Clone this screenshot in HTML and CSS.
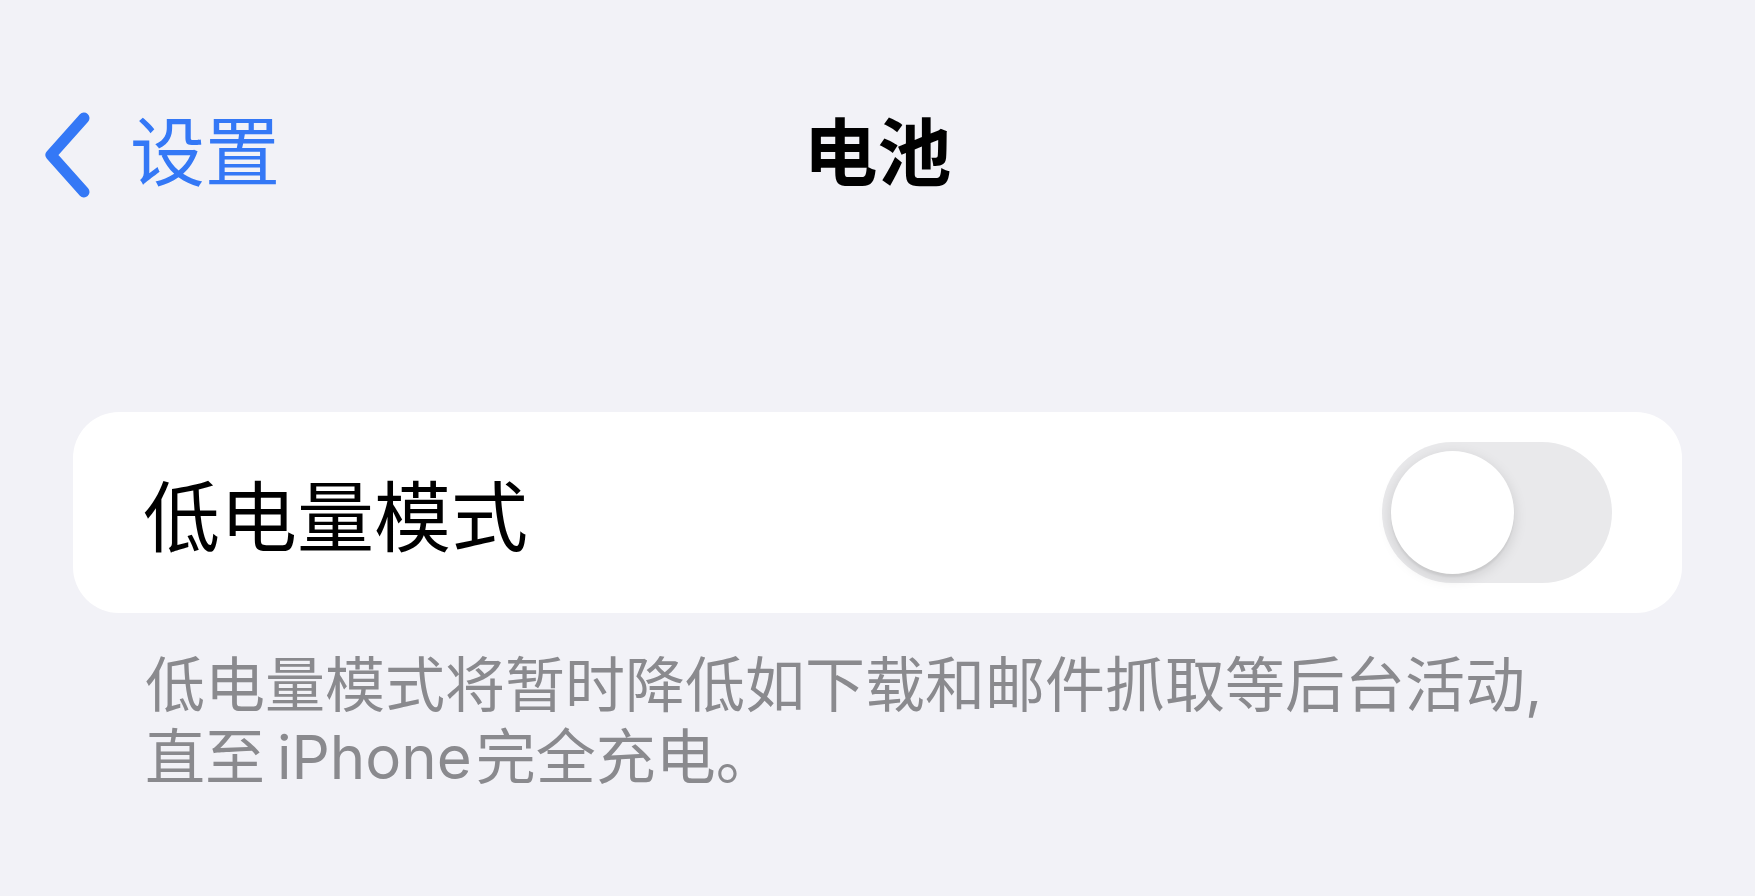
FILE: index.html
```html
<!DOCTYPE html>
<html lang="zh-CN">
<head>
    <meta charset="UTF-8">
    <meta name="viewport" content="width=device-width, initial-scale=1.0">
    <title>电池</title>
    <link rel="stylesheet" href="styles.css">
</head>
<body>
    <div class="nav-bar">
        <a class="back-link" href="#">
            <svg class="back-icon" viewBox="0 0 50 86" width="50" height="86">
                <path d="M42 6 L9 43 L42 80" fill="none" stroke="currentColor" stroke-width="11" stroke-linecap="round" stroke-linejoin="round"/>
            </svg>
            <span class="nav-text">设置</span>
        </a>
        <div class="nav-title nav-text">电池</div>
        <div></div>
    </div>

    <div class="group">
        <div class="row">
            <div class="row-label">低电量模式</div>
            <div class="switch" id="lowPower" onclick="toggleSwitch(this)">
                <div class="switch-knob"></div>
            </div>
        </div>
    </div>

    <div class="group-footer">
        低电量模式将暂时降低如下载和邮件抓取等后台活动,<br>直至<span class="latin">iPhone</span>完全充电。
    </div>

    <script>
        function toggleSwitch(el) {
            // 切换开关状态
            el.classList.toggle('on');
        }
    </script>
</body>
</html>
```

FILE: styles.css
```css
body {
    margin: 0;
    background-color: #f2f2f7;
    font-family: Inter, "Noto Sans CJK SC", sans-serif;
    color: #000;
}

.nav-bar {
    display: grid;
    grid-template-columns: 1fr auto 1fr;
    align-items: center;
    height: 110px;
    margin-top: 93px;
    padding: 0 42px;
}

.back-link {
    display: flex;
    align-items: center;
    gap: 38px;
    color: #3478f6;
    text-decoration: none;
    font-size: 75px;
}

.back-icon {
    display: block;
}

.nav-text {
    padding-bottom: 14px;
}

.nav-title {
    font-size: 74px;
    font-weight: 700;
}

.group {
    margin: 209px 73px 0;
    background-color: #fff;
    border-radius: 46px;
}

.row {
    display: flex;
    align-items: center;
    justify-content: space-between;
    height: 201px;
    padding: 0 70px 0 70px;
}

.row-label {
    font-size: 77px;
}

.switch {
    display: flex;
    align-items: center;
    box-sizing: border-box;
    width: 230px;
    height: 141px;
    padding: 0 9px;
    border-radius: 71px;
    background-color: #e9e9eb;
    cursor: pointer;
    transition: background-color 0.3s ease;
}

.switch-knob {
    width: 123px;
    height: 123px;
    border-radius: 50%;
    background-color: #fff;
    box-shadow: 0 4px 14px rgba(0, 0, 0, 0.13), 0 3px 2px rgba(0, 0, 0, 0.05);
    transition: transform 0.3s ease;
}

.switch.on {
    background-color: #34c759;
}

.switch.on .switch-knob {
    transform: translateX(89px);
}

.group-footer {
    margin-top: 36px;
    padding: 0 145px;
    font-size: 60px;
    line-height: 72px;
    color: #8a8a8e;
}

.latin {
    margin: 0 4px 0 12px;
}
```
